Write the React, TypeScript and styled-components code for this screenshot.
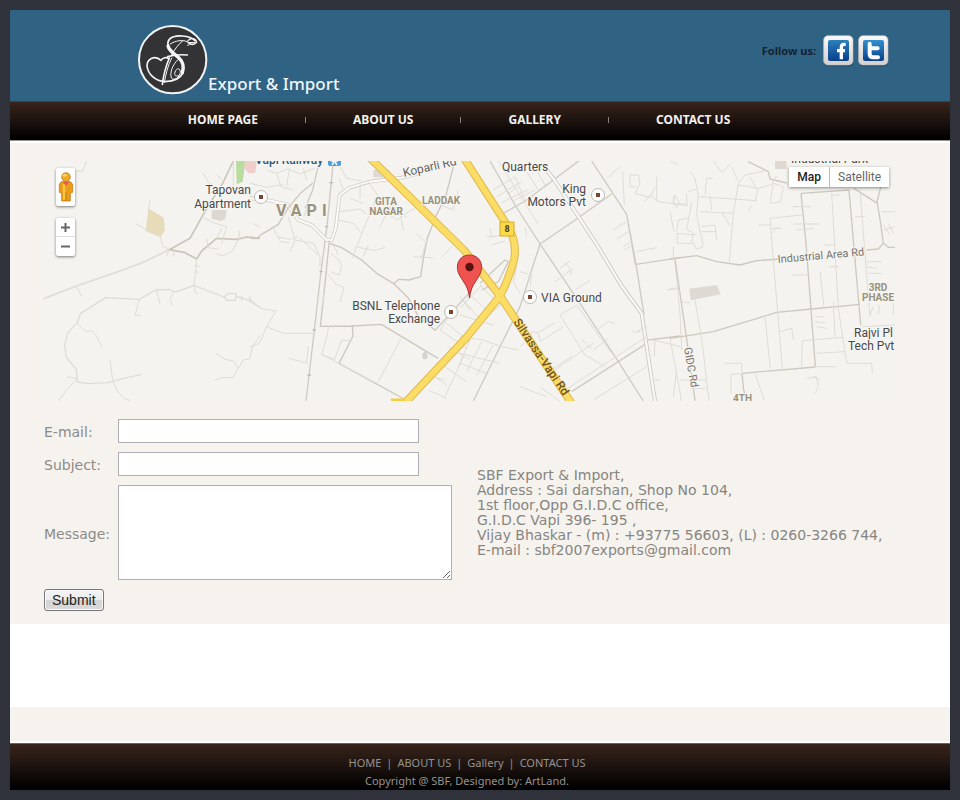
import React from "react";
import styled, { createGlobalStyle } from "styled-components";

const GlobalStyle = createGlobalStyle`
  *, *::before, *::after { box-sizing: border-box; }
  body {
    margin: 0;
    background: #2f323b;
    font-family: "DejaVu Sans", Verdana, sans-serif;
  }
`;

const Page = styled.div`
  min-height: 100vh;
  padding: 10px;
`;

const Header = styled.header`
  display: flex;
  justify-content: space-between;
  align-items: flex-start;
  padding: 14px 61px 5px 127px;
  background: #306283;
  border-bottom: 1px solid #26475d;
`;

const Brand = styled.a`
  display: flex;
  align-items: flex-end;
  color: #eef6fb;
  text-decoration: none;
  font: 500 17px/24px "Noto Sans", sans-serif;
`;

const Social = styled.div`
  display: flex;
  align-items: center;
  gap: 4px;
  padding-top: 11px;
`;

const FollowText = styled.span`
  margin-right: 3px;
  color: #14222e;
  font: 700 11px/14px "Noto Sans", sans-serif;
`;

const SocialLink = styled.a`
  display: block;
  height: 32px;
`;

const Nav = styled.nav`
  display: flex;
  justify-content: center;
  align-items: center;
  gap: 47px;
  height: 39px;
  padding: 0 42px 4px 0;
  background: linear-gradient(#38241a, #1b120e 50%, #000 95%);
`;

const NavLink = styled.a`
  color: #f3f1ee;
  font: 700 12px/16px "Noto Sans", sans-serif;
  text-decoration: none;
  white-space: nowrap;
`;

const NavDot = styled.span`
  width: 1px;
  height: 6px;
  background: #8b827c;
`;

const Content = styled.main`
  padding: 18px 55px 13px 33px;
  background: #f6f3ee;
  border-top: 2px solid #fff;
  outline: 1px solid #989591;
  clip-path: inset(-1px 0 0 0);
`;

const MapBox = styled.section`
  position: relative;
  height: 240px;
  overflow: hidden;

  > svg { display: block; width: 100%; height: 100%; }
`;

const MapControls = styled.div`
  position: absolute;
  top: 7px;
  left: 13px;
  display: flex;
  flex-direction: column;
  gap: 12px;
`;

const ControlGroup = styled.div`
  display: flex;
  flex-direction: column;
  background: #fff;
  border-radius: 2px;
  box-shadow: 0 1px 3px #00000080;
`;

const MapButton = styled.button<{ $tall?: boolean; $divided?: boolean }>`
  display: flex;
  align-items: center;
  justify-content: center;
  width: 19px;
  height: ${(p) => (p.$tall ? 38 : 19)}px;
  padding: 0;
  border: 0;
  border-bottom: ${(p) => (p.$divided ? "1px solid #ddd" : "0")};
  background: none;
`;

const MapTypes = styled.div`
  position: absolute;
  top: 6px;
  right: 6px;
  display: flex;
  background: #fff;
  box-shadow: 0 1px 3px #00000070;
`;

const TypeButton = styled.button<{ $active?: boolean }>`
  height: 20px;
  padding: 0 8px;
  border: 0;
  border-left: ${(p) => (p.$active ? "0" : "1px solid #bbb")};
  background: none;
  color: ${(p) => (p.$active ? "#222" : "#666")};
  font: ${(p) => (p.$active ? 500 : 400)} 12px/20px Roboto, sans-serif;
`;

const ContactRow = styled.div`
  display: flex;
  align-items: center;
  gap: 25px;
  padding-top: 18px;
`;

const Form = styled.form`
  display: grid;
  grid-template-columns: 74px auto;
  align-items: center;
  row-gap: 9px;
  padding-left: 1px;
`;

const Label = styled.label`
  padding-top: 2px;
  color: #8b8b88;
  font-size: 14px;
  line-height: 16px;
`;

const Input = styled.input`
  width: 301px;
  height: 24px;
  padding: 2px 4px;
  border: 1px solid #aeaeb4;
  background: #fff;
  font: inherit;
`;

const TextArea = styled.textarea`
  display: block;
  width: 334px;
  height: 95px;
  padding: 2px 4px;
  border: 1px solid #aeaeb4;
  background: #fff;
  font: inherit;
  resize: both;
`;

const Submit = styled.button`
  justify-self: start;
  height: 22px;
  padding: 0 7px;
  border: 1px solid #77777a;
  border-radius: 3px;
  background: linear-gradient(#f4f4f4, #ebebeb 50%, #d4d4d4 52%, #d9d9d9);
  box-shadow: inset 0 0 0 1px #fafafa;
  color: #222;
  font: 14px/20px "Liberation Sans", Arial, sans-serif;
`;

const Address = styled.address`
  padding-bottom: 5px;
  color: #858581;
  font-size: 14px;
  font-style: normal;
  line-height: 15px;
`;

const WhiteBand = styled.div`
  height: 83px;
  background: #fff;
`;

const BeigeBand = styled.div`
  height: 36px;
  background: #f6f3ee;
  border-bottom: 2px solid #fff;
`;

const Footer = styled.footer`
  padding: 10px 26px 0 0;
  border-top: 1px solid #6c665f;
  background: linear-gradient(#38241a, #1b120e 50%, #000 95%);
  color: #96928e;
  font: 11px/18px "Noto Sans", sans-serif;
  text-align: center;
`;

const FooterLinks = styled.div`
  display: flex;
  justify-content: center;
  gap: 5px;
`;

const FooterLink = styled.a`
  color: inherit;
  text-decoration: none;
`;

const tile = (x: number) => `translate(${x} 150) scale(.333333)`;

const Poi = ({ x, y }: { x: number; y: number }) => (
  <g>
    <circle cx={x} cy={y} r="6.5" fill="#fff" stroke="#bdb9b2" strokeWidth="1" />
    <rect x={x - 2} y={y - 2} width="4" height="4" fill="#7a452a" />
  </g>
);

const StreetMap = () => (
  <svg viewBox="43 161 852 240" preserveAspectRatio="xMidYMid slice" role="img" aria-label="Map of Vapi" fill="none">
    <rect x="-957" y="161" width="2852" height="240" fill="#f4f3ef" />

    <g transform={tile(40)} stroke="#dfdcd5" strokeWidth="3" strokeLinejoin="round">
      <path d="M325 175l46 28 4 38-13 20-45-17z" fill="#e6dcba" stroke="none" />
      <path d="M515 180h45l-5 28-15 5-25-7z" fill="#dcd7d0" stroke="none" />
      <path d="M588 33h28l-8 62-18 8z" fill="#b9dca0" stroke="none" />
      <path d="M616 33h35l-5 35-20 2-14-15z" fill="#efcfcc" stroke="none" />
      <path strokeWidth="5" d="M10 446L110 408 240 363 310 337 388 299" />
      <path d="M110 408l14 30M287 220l35 21 40 20 6 28 20 10M330 150l-5 32M140 33l-12 30h-20" />
      <path stroke="#cbc5ba" strokeWidth="5" d="M580 33L548 100 500 175 450 265 388 299 435 308 470 327 485 303 530 265 590 268 620 261 660 265" />
      <path d="M490 71l15 25 30 28M530 75l25 20M580 33v75M600 120l60 30M490 202l30 16 40 12-15 50M545 235l-15 30M500 265l5 28 30 4M600 240l-5 30-20 35-25 12-20-5M640 220l20 12M470 327l-8 80 3 20 10 5M465 345l15 5M465 365l10 2M388 299l-10 22M402 305l-2 15" />
      <path strokeWidth="4" d="M462 406l90 35 12-10h25l-3 20h-25l-9-10M590 440l30 8 40 24M605 436v16M630 440v14M462 406l-55 20-20-8-40 2-50 28-100-5-75 47-10 28-28 30-10 35 5 38 30 38 3 37 35 5 55-3 50-13 52-12" />
      <path d="M297 450l-12 46h18M350 421l10 40M402 425l-12 20 7 23M112 520l25 25 20-2 12 15 17 33M112 685l-32 35-25 33M80 680l33 6M210 630l8 60 15 35 22 21 17 6M528 611l27 17 25 5 15 22-15 27-40 2-15 6M595 655l15-25 20-4 7-35 23-35" />
    </g>

    <g transform={tile(250)} stroke="#dfdcd5" strokeWidth="3" strokeLinejoin="round">
      <path stroke="#cfcbc3" strokeWidth="4" d="M208 33L188 120 165 175M250 33L232 220 213 365 193 540 168 753" />
      <path stroke="#bfbab1" strokeWidth="4" d="M238 98h12M225 230h10M208 365h10M188 540h10M173 675h10" />
      <path stroke="#d2cec6" strokeWidth="11" d="M0 145l50 5 60 12 35 48 40 15 45 45h15l12-35 12-100 30-22 60-18 95-12 60-15" />
      <path stroke="#fcfcfa" strokeWidth="6" d="M0 145l50 5 60 12 35 48 40 15 45 45h15l12-35 12-100 30-22 60-18 95-12 60-15" />
      <path stroke="#cdc8be" strokeWidth="4" d="M188 100l-35 28-38 45-30 50-50 30-15 13-20-2M238 272L225 400l-14 129 95-1 88-5 170 102M240 280l35 13 60 37 45 40 50 30 45 44 30 55 50 42 110-120M432 400l15-12 30 2 35-10 8-55 12-60 25-65 30-60 23-90M307 528l2 30-42 82 195 107" />
      <path d="M50 60l30 10 35-14 35 16 45-18M80 70l12 40 38 10M0 100l50 12 50-8M118 58l-8 50M160 55l10 35M270 50l20 35 45 8M280 120l-12-35M330 100v45M350 90l40 55M380 140l-60 150M340 160l-40-15M270 185l60-8 20 15M265 210l45 10 25 30M318 290l-10 35M318 290l55 12 32-10M340 320l15-35M400 180l40 30 60-40M450 190l10 50M430 150l-40 80M470 205l-40-40M560 160l50 20 15-60M540 200l45 30M500 250l30 30M490 320l60 4M575 322l35-35M530 270l-15 55" />
      <path d="M170 175l-8 25M70 235l22 40 25 3M80 260l40 8 25-8M115 200l20 70-15 35M150 265l55 50M135 270l55 10 20 40v28M242 310l25 20 8 20-8 25-25-10M232 370l25 32 25 10-12 45M222 430l-5 35M250 285l15 30M0 445l30 30 48 8-28 47-22 50-28 10M50 530l50 20h92M115 625l55 14 5-50M236 530l-8 40-13 43 38 16 22-58h28M452 566l-68 132M525 605v20M600 495l-30 45 80 55M630 440l30 40M590 520l70 55M595 590l65 40M540 670l50 35M570 640l80 55M640 620l-55 120M535 720l55 25M530 675l55 15" />
      <path d="M215 613l155 82" />
      <path d="M370 60h50v22h-50z" fill="#dedad3" stroke="none" />
      <ellipse cx="525" cy="617" rx="8" ry="11" fill="#d6d2cc" stroke="none" />
    </g>

    <g transform={tile(460)} stroke="#dfdcd5" strokeWidth="3" strokeLinejoin="round">
      <path stroke="#cfcbc2" strokeWidth="4" d="M90 33L165 165 240 282 340 430 475 635 550 753M395 33l105 160 26 150M500 193l28 150 24 150M528 343l132-20M240 282l110-75 105-75M240 282L180 470 130 570 40 753M565 570l95-12M130 190l70-40 160-120M335 725l140-90 85-55M60 400l75-70 10 5-30 60-50 25" />
      <path stroke="#ccc8bf" strokeWidth="12" d="M260 60l25 33 125 190 75 125 60 82 40 263" />
      <path stroke="#f9f8f5" strokeWidth="7" d="M260 60l25 33 125 190 75 125 60 82 40 263" />
      <path d="M100 120l65-40M110 140l75-45M125 158l80-40M155 155l70-35M165 80l30 70M200 65l35 55M230 60l25 45M145 130l30-20M90 235l5 25 35-5M95 285l40-12M80 260h25M200 260l-5-30M115 33l50 80 70 110M170 350l-10 45 20 35M180 365l35 10-5 35M300 355l30-22M315 340l12 10 8 25M285 395l55-40M345 420l45-28M440 85l40-35M460 240l40-25M470 268l35-23M490 290l20-12M493 300l20-12M530 305l60-12M488 65l5 100M510 75h25l5 25-15 30 45 12 15-30M510 75v35h15M590 80v75M555 155l15-20 25 20 90 12M640 140v22h40v-30M620 420l40-5M645 335l15 155 5 110M585 570l-2 50M530 545l30-15M300 495l50-30 105 145M300 495l75 120 60 35M400 600l45-35M410 540l35-25 20 5M365 570l15 10M380 585l15 10M515 540l10 8 15-5M400 750l160-100M180 590l30-25 5-20 20 3 50-30M235 550l5 25 70-45M265 665l70-45M0 560l70 10 55 20 50 10M30 570l-35 80M65 575l-45 90M100 585l-50 90M0 610l120 30M0 640l80 30M240 710l60 45M180 710l80 30M80 500l60-50M0 475l65-70M0 495l100 30M25 430l70 65M60 405l60 60M10 450l60 70M20 545l60-70M585 690h15M580 570l80 20M640 740l10-80" />
      <path d="M300 730l260-170M270 670l130-90" />
    </g>

    <g transform={tile(670)} stroke="#dfdcd5" strokeWidth="3" strokeLinejoin="round">
      <path fill="#dfd9d4" stroke="none" d="M58 416l82-11 12 28-90 18zM315 33h35v24h-35z" />
      <path stroke="#cec9be" strokeWidth="4" d="M0 327l80-10 60 18 70 10 50-13 70-5M590 300l35-3 15-17 15 12h22M640 280l-8-60-10-60-70-45M620 160l20-80M15 327l35 240 25 185M0 565l130-20 100-30 90-28 105-10 145-14M393 130l15 150 28 370M393 130l144-10 35 405M216 670l220-19M216 670l5 50 10 30M235 35l60 30 5 22 50 12" />
      <path d="M0 35l25 8M60 65l15 20 10 50-5 60 20 95-20 8-15-25 5-25-20-10 15-80M55 125l25-8M105 135l5-50h18M90 140l170 12M120 140l5 40M90 185l100 5-12 145M190 190l15-90 20-25 60-12M205 105l60 10-10 40M265 115l40-12 15-25M240 80l20 35M300 160l10-60 30 10-8 45-30 5M155 187l25 40M15 135l15 25-10 12-10-12zM20 245l5-35 30-5M0 185l12 60M20 250l60 5M22 250v30h45M95 230l40-5 5 45M95 245h45M10 290v35M265 225h40M395 195l-95 10 10 125 27 325M305 235h30M325 230l-20 20M368 170h55M370 222h80M380 240l50-5M485 130l20 345M570 120l30 380M450 365l12 105M490 455l5 105M505 475l25 165h75l2 30M555 200h30M590 335h45M590 350l30 5M595 370h40M435 500h25M435 515l30 5M440 530l30 5M395 650l2-78 125-10M440 610l85-5M437 650h60M410 685l30-5 5 30-10 20M430 680l20 10M285 500l16 155M330 545l35-10 5 35M75 450l22 130 20 172M0 565l35 190M30 690h80M60 715h50M183 730v-58h30M255 670l28 80M165 640h50v25M0 415h20M365 375h50M475 350h30M485 135h25M635 185h42M640 240l35-10M640 225l20 30M655 220l15 30M600 495l10-25M625 495l3-30M670 495v-35M575 530l100-5M465 285h30M235 182l10-15M130 33l25 35 30-30M185 50l20 45M35 457h25" />
    </g>

    <g strokeLinejoin="round">
      <path stroke="#e0b84c" strokeWidth="8" d="M370 158L464 250 500 296M462 155L505 222Q518 240 514 260Q510 276 500 296L466 338 403 405M500 296L514 317 572 404" />
      <path stroke="#fbdc64" strokeWidth="6" d="M370 158L464 250 500 296M462 155L505 222Q518 240 514 260Q510 276 500 296L466 338 403 405M500 296L514 317 572 404" />
      <path stroke="#f6cd3c" strokeWidth="5" d="M391 401h14" />
      <path fill="#fbd94a" stroke="#d8a927" d="M500 222h14v14h-14z" />
    </g>

    <g fill="#484848" stroke="#f7f6f3" strokeWidth="2" paintOrder="stroke" fontFamily="Roboto, sans-serif" fontSize="12">
      <text x="251" y="194" textAnchor="end">Tapovan</text>
      <text x="251" y="208" textAnchor="end">Apartment</text>
      <text x="440" y="310" textAnchor="end">BSNL Telephone</text>
      <text x="440" y="323" textAnchor="end">Exchange</text>
      <text x="502" y="171">Quarters</text>
      <text x="586" y="193" textAnchor="end">King</text>
      <text x="586" y="206" textAnchor="end">Motors Pvt</text>
      <text x="541" y="302">VIA Ground</text>
      <text x="854" y="337">Rajvi Pl</text>
      <text x="848" y="350">Tech Pvt</text>
      <text x="791" y="163">Industrial Park</text>
      <text x="255" y="164" fill="#2c587c" fontWeight="500">Vapi Railway</text>
      <text fill="#66625c" transform="translate(404 177) rotate(-13)">Koparli Rd</text>
      <text fill="#77736b" fontSize="11" transform="translate(778 263) rotate(-5)">Industrial Area Rd</text>
      <text fill="#77736b" fontSize="11" transform="translate(684 348) rotate(80)">GIDC Rd</text>
      <text fill="#6f5525" fontWeight="500" stroke="none" transform="translate(513 322) rotate(56)">Silvassa-Vapi Rd</text>
      <text x="507" y="232" textAnchor="middle" fill="#4d421b" fontSize="9" fontWeight="700" stroke="none">8</text>
    </g>
    <g fill="#99917a" stroke="#f7f6f3" strokeWidth="2" paintOrder="stroke" fontFamily="Roboto, sans-serif" fontSize="10" fontWeight="700">
      <text x="386" y="205" textAnchor="middle">GITA</text>
      <text x="386" y="215" textAnchor="middle">NAGAR</text>
      <text x="422" y="204">LADDAK</text>
      <text x="878" y="291" textAnchor="middle">3RD</text>
      <text x="878" y="301" textAnchor="middle">PHASE</text>
      <text x="733" y="402">4TH</text>
      <text x="276" y="216" fontSize="16" letterSpacing="5">VAPI</text>
    </g>

    <Poi x={261} y={197} />
    <Poi x={451} y={312} />
    <Poi x={598} y={195} />
    <Poi x={530} y={297} />

    <rect x="328" y="154" width="13" height="12" rx="2" fill="#4e9be0" />
    <path stroke="#fff" strokeWidth="1.5" d="M331 161h7M332 165l2-3M337 165l-2-3" />

    <path
      fill="#ee5350"
      stroke="#a8302e"
      strokeWidth="1"
      d="M469.500 298C468.500 287 464 283 460 276C454 266 459 255 469.500 255C480 255 485 266 479 276C475 283 470.500 287 469.500 298Z"
    />
    <circle cx="469.500" cy="267" r="4.200" fill="#5a1210" />
  </svg>
);

const Logo = () => (
  <svg width="71" height="72" viewBox="0 0 213 216" fill="none" strokeLinecap="round" strokeLinejoin="round" aria-hidden="true">
    <circle cx="107" cy="107" r="101" fill="#333335" stroke="#f1f3f4" strokeWidth="6" />
    <g stroke="#f4f4f4">
      <path strokeWidth="5" d="M174 50C160 34 112 30 97 46C84 64 99 80 114 93C134 108 144 122 138 146C130 165 106 172 84 173C54 172 33 150 30 126C30 104 54 92 72 109C78 100 88 99 94 103" />
      <path strokeWidth="10" d="M93 66C97 82 112 89 124 100C139 114 142 128 136 146" />
      <path strokeWidth="3" d="M100 60C114 50 137 46 153 54C161 58 159 64 152 64M138 50C124 60 112 78 104 92" />
      <path strokeWidth="4" d="M153 50C162 40 176 43 179 55C171 64 161 62 153 56M157 56h16" />
      <path strokeWidth="5" d="M92 98Q118 90 151 93" />
      <path strokeWidth="5" d="M97 102C87 125 80 150 76 181" />
      <path strokeWidth="3" d="M104 102C92 125 86 154 82 176M124 106C106 122 98 146 103 162C112 172 128 160 130 145C130 130 118 132 114 144C110 157 120 160 128 152" />
    </g>
  </svg>
);

const SocialBadge = ({ kind }: { kind: "facebook" | "twitter" }) => (
  <svg width="31" height="32" viewBox="0 0 93 96" fill="none">
    <defs>
      <linearGradient id={`${kind}-tile`} x1="0" y1="0" x2="0" y2="1">
        <stop offset="0" stopColor={kind === "facebook" ? "#2f7fbd" : "#3491cc"} />
        <stop offset="1" stopColor="#08408c" />
      </linearGradient>
      <linearGradient id={`${kind}-frame`} x1="0" y1="0" x2="0" y2="1">
        <stop offset="0" stopColor="#fbfbfb" />
        <stop offset="1" stopColor="#d3cfcc" />
      </linearGradient>
    </defs>
    <rect x="3" y="5" width="88" height="89" rx="13" fill="#17405f" />
    <rect x="2" y="2" width="88" height="88" rx="13" fill={`url(#${kind}-frame)`} stroke="#bcc3c8" strokeWidth="2" />
    <rect x="15" y="15" width="63" height="63" rx="6" fill={`url(#${kind}-tile)`} />
    {kind === "facebook" ? (
      <path stroke="#fff" strokeWidth="10" d="M68 28h-6q-7 0-7 10v35M42 47h24" />
    ) : (
      <path stroke="#fff" strokeWidth="12" strokeLinecap="round" strokeLinejoin="round" d="M35 26v30q0 11 11 11h14M35 40h24" />
    )}
  </svg>
);

const Pegman = () => (
  <svg width="16" height="32" viewBox="0 0 48 96" aria-hidden="true">
    <path fill="#e99c18" stroke="#b86c13" strokeWidth="2" d="M10 32h28l6 8v24l-7 2v24H11V66l-7-2V40z" />
    <path fill="#f9c643" d="M14 38h8v48h-7z" />
    <path fill="#e65b4c" d="M14 32h20L24 45z" />
    <path stroke="#b86c13" strokeWidth="2" d="M24 64v25" />
    <circle cx="24" cy="18" r="13" fill="#efab24" stroke="#b86c13" strokeWidth="2" />
    <ellipse cx="20" cy="13" rx="6" ry="4" fill="#fbd675" />
  </svg>
);

const navItems = ["HOME PAGE", "ABOUT US", "GALLERY", "CONTACT US"];
const footerItems = ["HOME", "ABOUT US", "Gallery", "CONTACT US"];

export default function App() {
  return (
    <>
      <GlobalStyle />
      <Page>
        <Header>
          <Brand href="#">
            <Logo />
            Export &amp; Import
          </Brand>
          <Social>
            <FollowText>Follow us:</FollowText>
            <SocialLink href="#" aria-label="Facebook"><SocialBadge kind="facebook" /></SocialLink>
            <SocialLink href="#" aria-label="Twitter"><SocialBadge kind="twitter" /></SocialLink>
          </Social>
        </Header>
        <Nav>
          {navItems.map((item, i) => (
            <React.Fragment key={item}>
              {i > 0 && <NavDot />}
              <NavLink href="#">{item}</NavLink>
            </React.Fragment>
          ))}
        </Nav>
        <Content>
          <MapBox>
            <StreetMap />
            <MapControls>
              <ControlGroup>
                <MapButton type="button" $tall aria-label="Street View"><Pegman /></MapButton>
              </ControlGroup>
              <ControlGroup>
                <MapButton type="button" $divided aria-label="Zoom in">
                  <svg width="9" height="9" viewBox="0 0 9 9"><path stroke="#666" strokeWidth="2" d="M0 4.500h9M4.500 0v9" /></svg>
                </MapButton>
                <MapButton type="button" aria-label="Zoom out">
                  <svg width="9" height="9" viewBox="0 0 9 9"><path stroke="#666" strokeWidth="2" d="M0 4.500h9" /></svg>
                </MapButton>
              </ControlGroup>
            </MapControls>
            <MapTypes>
              <TypeButton type="button" $active>Map</TypeButton>
              <TypeButton type="button">Satellite</TypeButton>
            </MapTypes>
          </MapBox>
          <ContactRow>
            <Form onSubmit={(e) => e.preventDefault()}>
              <Label htmlFor="email">E-mail:</Label>
              <Input id="email" type="email" />
              <Label htmlFor="subject">Subject:</Label>
              <Input id="subject" type="text" />
              <Label htmlFor="message">Message:</Label>
              <TextArea id="message" />
              <Submit type="submit">Submit</Submit>
            </Form>
            <Address>
              SBF Export &amp; Import,<br />
              Address : Sai darshan, Shop No 104,<br />
              1st floor,Opp G.I.D.C office,<br />
              G.I.D.C Vapi 396- 195 ,<br />
              Vijay Bhaskar - (m) : +93775 56603, (L) : 0260-3266 744,<br />
              E-mail : sbf2007exports@gmail.com
            </Address>
          </ContactRow>
        </Content>
        <WhiteBand />
        <BeigeBand />
        <Footer>
          <FooterLinks>
            {footerItems.map((item, i) => (
              <React.Fragment key={item}>
                {i > 0 && <span>|</span>}
                <FooterLink href="#">{item}</FooterLink>
              </React.Fragment>
            ))}
          </FooterLinks>
          Copyright @ SBF, Designed by: ArtLand.
        </Footer>
      </Page>
    </>
  );
}
